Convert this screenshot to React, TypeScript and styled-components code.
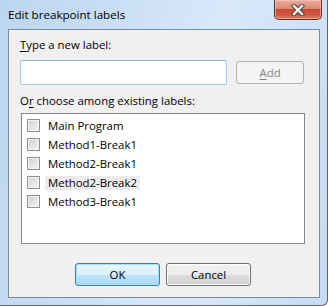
import React from 'react'
import styled, { createGlobalStyle } from 'styled-components';

const GlobalStyle = createGlobalStyle`
    html, body {
        margin: 0;
        padding: 0;
        background: #ffffff;
    }
    body {
        font-family: "Segoe UI", "Open Sans", "Noto Sans", sans-serif;
        font-size: 11.4px;
    }
`

const labels = ['Main Program', 'Method1-Break1', 'Method2-Break1', 'Method2-Break2', 'Method3-Break1'];

function CloseGlyph() {
    return (
        <svg width="14" height="12" viewBox="0 0 14 12">
            <path d="M3 2 L11 10 M11 2 L3 10" stroke="#3b3b3b" strokeWidth="4.4" strokeLinecap="square" />
            <path d="M3 2 L11 10 M11 2 L3 10" stroke="#ffffff" strokeWidth="2.4" strokeLinecap="square" />
        </svg>
    )
}

function App() {
    return (
        <>
            <GlobalStyle />
            <Window>
                <TitleBar>
                    <Title>Edit breakpoint labels</Title>
                    <CloseButton><CloseGlyph /></CloseButton>
                </TitleBar>
                <Client>
                    <FieldLabel><u>T</u>ype a new label:</FieldLabel>
                    <InputRow>
                        <TextBox />
                        <Button disabled><u>A</u>dd</Button>
                    </InputRow>
                    <FieldLabel>O<u>r</u> choose among existing labels:</FieldLabel>
                    <ListBox>
                        {labels.map((label, index) => (
                            <ListItem key={index}>
                                <CheckBox />
                                <ItemText hovered={index === 3}>{label}</ItemText>
                            </ListItem>
                        ))}
                    </ListBox>
                    <ButtonRow>
                        <Button primary>OK</Button>
                        <Button>Cancel</Button>
                    </ButtonRow>
                </Client>
            </Window>
        </>
    )
}

export default App

const Window = styled.div`
    width: 328px;
    height: 306px;
    box-sizing: border-box;
    display: flex;
    flex-direction: column;
    padding: 0 7px 7px 8px;
    background: linear-gradient(100deg, #bcd6f1 0%, #c9def5 30%, #d9e9fa 60%, #c6dcf4 100%);
    border-right: 1px solid #5a6570;
    border-bottom: 1px solid #5a6570;
    border-radius: 0 0 6px 0;
`

const TitleBar = styled.div`
    height: 29px;
    display: flex;
    justify-content: space-between;
    align-items: flex-start;
    margin-right: -2px;
`

const Title = styled.div`
    padding-top: 7px;
    font-size: 11.6px;
    color: #000000;
    line-height: 15px;
`

const CloseButton = styled.div`
    width: 46px;
    height: 19px;
    display: flex;
    align-items: center;
    justify-content: center;
    border: 1px solid #6b2e26;
    border-top: none;
    border-radius: 0 0 5px 5px;
    background: linear-gradient(to bottom, #e9ab9b 0%, #dc8a74 45%, #c84a31 50%, #cf5b40 80%, #e08563 100%);
    box-shadow: inset 0 0 0 1px rgba(255, 210, 200, 0.5);
`

const Client = styled.div`
    flex: 1;
    display: flex;
    flex-direction: column;
    background: #f0f0f0;
    border: 1px solid #7d8a98;
    padding: 7px 15px 0 11px;
`

const FieldLabel = styled.div`
    line-height: 15px;
    color: #000000;
    u {
        text-decoration: underline;
        text-underline-offset: 2px;
    }
`

const InputRow = styled.div`
    display: flex;
    align-items: center;
    gap: 9px;
    margin: 8px 0 8px 0;
`

const TextBox = styled.div`
    width: 208px;
    height: 25px;
    box-sizing: border-box;
    background: #ffffff;
    border: 1px solid #a6c8e6;
    border-top-color: #8fb6dc;
    border-radius: 2px;
`

const Button = styled.button<{ primary?: boolean }>`
    width: 68px;
    height: 23px;
    box-sizing: border-box;
    font-family: inherit;
    font-size: 11.4px;
    padding: 0;
    border-radius: 3px;
    color: #000000;
    border: 1px solid ${p => (p.primary ? '#3c7fb1' : '#707070')};
    background: ${p => (p.primary
        ? 'linear-gradient(to bottom, #eaf6fd 0%, #d9f0fc 50%, #bee6fd 51%, #a7d9f5 100%)'
        : 'linear-gradient(to bottom, #f2f2f2 0%, #ebebeb 50%, #dddddd 51%, #cfcfcf 100%)')};
    box-shadow: inset 0 0 0 1px ${p => (p.primary ? '#a6e0fb' : '#fcfcfc')};
    &:disabled {
        color: #838383;
        border-color: #adb2b5;
        background: #f4f4f4;
        box-shadow: none;
    }
    u {
        text-underline-offset: 2px;
    }
`

const ListBox = styled.div`
    height: 131px;
    width: 284px;
    box-sizing: border-box;
    margin-left: 1px;
    margin-top: 5px;
    background: #ffffff;
    border: 1px solid #828790;
    padding: 2px 0 0 5px;
`

const ListItem = styled.div`
    height: 19px;
    display: flex;
    align-items: center;
`

const CheckBox = styled.span`
    width: 13px;
    height: 13px;
    box-sizing: border-box;
    border: 1px solid #8f8f8f;
    background: linear-gradient(135deg, #cbcfd5 0%, #f6f6f6 100%);
    box-shadow: inset 0 0 0 1px #f4f4f4;
    margin-right: 5px;
`

const ItemText = styled.span<{ hovered?: boolean }>`
    padding: 0 3px;
    line-height: 14px;
    background: ${p => (p.hovered ? '#ececec' : 'transparent')};
    color: #000000;
`

const ButtonRow = styled.div`
    display: flex;
    justify-content: center;
    gap: 6px;
    margin-top: 19px;
    margin-left: 2px;
    button {
        width: 85px;
    }
`
